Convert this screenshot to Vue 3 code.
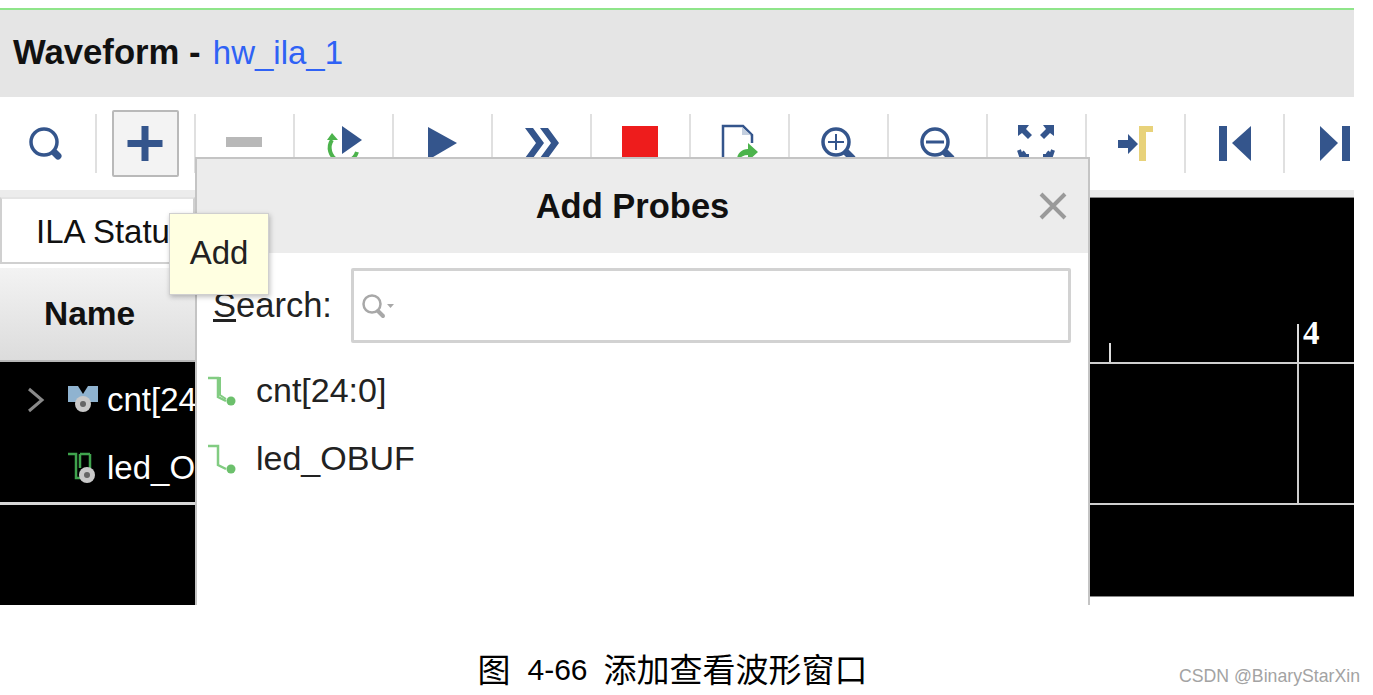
<script setup>
const blue = '#34558c'
const green = '#4cb34c'
const tools = [
  { name: 'search', parts: [
    { el: 'circle', cx: 28, cy: 28, r: 13, fill: 'none', stroke: blue, 'stroke-width': 3.500 },
    { el: 'path', d: 'M39 39l3 3', fill: 'none', stroke: blue, 'stroke-width': 7, 'stroke-linecap': 'round' } ] },
  { name: 'add', active: true, parts: [
    { el: 'path', d: 'M26.500 12h7v14h14v7h-14v14h-7v-14h-14v-7h14z', fill: blue } ] },
  { name: 'remove', parts: [
    { el: 'rect', x: 12, y: 23, width: 36, height: 10, fill: '#b8b8b8' } ] },
  { name: 'rerun', parts: [
    { el: 'path', d: 'M19 26a14 14 0 1 0 25 12', fill: 'none', stroke: green, 'stroke-width': 4 },
    { el: 'path', d: 'M14 26l5-7 6 7z', fill: green },
    { el: 'path', d: 'M29 12l20 14-20 14z', fill: blue } ] },
  { name: 'play', parts: [
    { el: 'path', d: 'M16 13l29 16-29 17z', fill: blue } ] },
  { name: 'forward', parts: [
    { el: 'path', d: 'M14 14h8l11 15-11 15h-8l11-15zM29 14h8l11 15-11 15h-8l11-15z', fill: blue } ] },
  { name: 'stop', parts: [
    { el: 'rect', x: 12, y: 12, width: 36, height: 36, fill: '#ee1c1c' } ] },
  { name: 'export', parts: [
    { el: 'path', d: 'M14 46V12h20l9 9v8', fill: 'none', stroke: blue, 'stroke-width': 2.500 },
    { el: 'path', d: 'M33 13v8h9z', fill: '#c4cfdf' },
    { el: 'path', d: 'M28 46c0-7 5-11 11-11v-6l10 9-10 9v-6c-4 0-8 2-11 5z', fill: green } ] },
  { name: 'zoom-in', parts: [
    { el: 'circle', cx: 28, cy: 28, r: 13, fill: 'none', stroke: blue, 'stroke-width': 3.500 },
    { el: 'path', d: 'M20 28h16M28 20v16', fill: 'none', stroke: blue, 'stroke-width': 2 },
    { el: 'path', d: 'M39 39l5 5', fill: 'none', stroke: blue, 'stroke-width': 7, 'stroke-linecap': 'round' } ] },
  { name: 'zoom-out', parts: [
    { el: 'circle', cx: 28, cy: 28, r: 13, fill: 'none', stroke: blue, 'stroke-width': 3.500 },
    { el: 'path', d: 'M19 28h18', fill: 'none', stroke: blue, 'stroke-width': 3 },
    { el: 'path', d: 'M39 39l5 5', fill: 'none', stroke: blue, 'stroke-width': 7, 'stroke-linecap': 'round' } ] },
  { name: 'fit', parts: [
    { el: 'path', d: 'M12 11h11l-3 4 6 6-4 4-6-6-4 3zM48 11H37l3 4-6 6 4 4 6-6 4 3z', fill: blue },
    { el: 'path', d: 'M13 36l2 6h8M47 36l-2 6h-8M14 42l5-4M46 42l-5-4', fill: 'none', stroke: blue, 'stroke-width': 4 } ] },
  { name: 'marker', parts: [
    { el: 'path', d: 'M13 26h10v-6l10 10-10 10v-6H13z', fill: blue },
    { el: 'path', d: 'M34 12h14v6h-7v29h-7z', fill: '#e8d27a' } ] },
  { name: 'prev', parts: [
    { el: 'rect', x: 15, y: 12, width: 8, height: 35, fill: blue },
    { el: 'path', d: 'M47 12v35L28 29z', fill: blue } ] },
  { name: 'next', parts: [
    { el: 'path', d: 'M16 12v35l18-18z', fill: blue },
    { el: 'rect', x: 38, y: 12, width: 8, height: 35, fill: blue } ] }
]
const attrs = ({ el, ...rest }) => rest
const probes = [
  { name: 'cnt[24:0]', double: true },
  { name: 'led_OBUF', double: false }
]
</script>

<template>
  <div class="page">
    <div class="shot">
      <header class="title">
        <b>Waveform -</b>&nbsp;<span class="link">hw_ila_1</span>
      </header>

      <div class="toolbar">
        <div v-for="t in tools" :key="t.name" class="tool" :class="{ active: t.active }">
          <svg class="tool-icon" width="60" height="59" viewBox="0 0 60 59">
            <component :is="p.el" v-for="(p, i) in t.parts" :key="i" v-bind="attrs(p)" />
          </svg>
        </div>
      </div>

      <div class="strip"></div>

      <div class="main">
        <section class="left">
          <div class="tab">ILA Status</div>
          <div class="colhead">Name</div>
          <div class="tree">
            <div class="row">
              <svg class="chev" width="20" height="30" viewBox="0 0 20 30">
                <path d="M3 4l13 11L3 26" fill="none" stroke="#8a8a8a" stroke-width="3" />
              </svg>
              <svg class="sig" width="32" height="30" viewBox="0 0 32 30">
                <path d="M1 1h10l5 8 5-8h10v16H21l-5 3-5-3H1z" fill="#8fb3d0" />
                <circle cx="16" cy="19" r="8" fill="#c9c9c9" />
                <circle cx="16" cy="19" r="3" fill="#666" />
              </svg>
              <span>cnt[24:0]</span>
            </div>
            <div class="row second">
              <svg class="sig" width="32" height="32" viewBox="0 0 32 32">
                <path d="M1 2h8v24h6M13 2v14M23 2v14M13 2h10" fill="none" stroke="#3fa34d" stroke-width="2.500" />
                <circle cx="20" cy="23" r="8" fill="#c9c9c9" />
                <circle cx="20" cy="23" r="3" fill="#666" />
              </svg>
              <span>led_OBUF</span>
            </div>
          </div>
        </section>

        <section class="wave">
          <div class="ruler">
            <i class="tick"></i>
            <i class="major"></i>
            <span class="digit">4</span>
          </div>
          <div class="lane"></div>
          <div class="rest"></div>
        </section>
      </div>

      <div class="dialog">
        <div class="dlg-head">
          <strong>Add Probes</strong>
          <svg class="close" width="30" height="30" viewBox="0 0 30 30">
            <path d="M3 3l24 24M27 3L3 27" fill="none" stroke="#9a9a9a" stroke-width="4" />
          </svg>
        </div>
        <div class="search">
          <label><u>S</u>earch:</label>
          <div class="input">
            <svg width="40" height="30" viewBox="0 0 40 30">
              <circle cx="13" cy="13" r="8.500" fill="none" stroke="#a8a8a8" stroke-width="2.500" />
              <path d="M19 20l5 5" stroke="#a8a8a8" stroke-width="4" stroke-linecap="round" />
              <path d="M28 13h7l-3.500 4z" fill="#a8a8a8" />
            </svg>
          </div>
        </div>
        <ul class="probes">
          <li v-for="p in probes" :key="p.name">
            <svg width="38" height="36" viewBox="0 0 38 36">
              <path d="M1 6h10v19l8 4" fill="none" stroke="#82cc82" stroke-width="2.500" />
              <path v-if="p.double" d="M5 6h8v17l6 4" fill="none" stroke="#82cc82" stroke-width="2" />
              <circle cx="24" cy="29" r="4.500" fill="#6cc06c" />
            </svg>
            <span>{{ p.name }}</span>
          </li>
        </ul>
      </div>

      <div class="tip">Add</div>
    </div>

    <footer class="caption">
      <span class="fig">图</span><span class="num">4-66</span><span>添加查看波形窗口</span>
    </footer>
    <div class="mark">CSDN @BinaryStarXin</div>
  </div>
</template>

<style>
html, body { margin: 0; background: #fff; }
</style>

<style scoped>
.page {
  position: relative;
  width: 1373px;
  height: 695px;
  overflow: hidden;
  background: #fff;
  color: #111;
  font-family: "Liberation Sans", Arial, sans-serif;
}
.shot {
  position: relative;
  width: 1354px;
  height: 597px;
  margin-top: 8px;
  overflow: hidden;
  background: #fff;
}
.title {
  height: 85px;
  border-top: 2px solid #8fe58a;
  background: #e5e5e5;
  display: flex;
  align-items: center;
  padding-left: 13px;
  padding-bottom: 2px;
  font-size: 33px;
  white-space: pre;
}
.title b { font-size: 34.700px; }
.link { color: #2f62f5; margin-left: 3px; }
.toolbar {
  display: flex;
  height: 59px;
  padding: 17px 0;
  margin-left: -2px;
  width: 1400px;
  background: #fff;
}
.tool {
  position: relative;
  flex: 0 0 99px;
  box-sizing: border-box;
  height: 59px;
  border-right: 2px solid #e0e0e0;
  display: flex;
  justify-content: center;
}
.tool:last-child { border-right: 0; }
.tool-icon { position: relative; flex: none; margin-left: -2px; }
.tool.active::before {
  content: "";
  position: absolute;
  left: 15px;
  right: 15px;
  top: -4px;
  bottom: -4px;
  border: 2px solid #b9b9b9;
  border-radius: 2px;
  background: #f3f3f3;
}
.strip { height: 7px; background: #ececec; }
.main { display: flex; height: 408px; }
.left { width: 195px; flex: none; display: flex; flex-direction: column; }
.tab {
  height: 67px;
  box-sizing: border-box;
  border: 2px solid #d0d0d0;
  border-top-color: #e4e4e4;
  background: #fff;
  padding-left: 34px;
  font-size: 33px;
  line-height: 66px;
  white-space: nowrap;
  overflow: hidden;
  flex: none;
}
.colhead {
  height: 94px;
  margin-top: 4px;
  flex: none;
  box-sizing: border-box;
  border-bottom: 2px solid #b8b8b8;
  background: linear-gradient(#f3f3f3, #dcdcdc);
  padding-left: 44px;
  font-size: 33.500px;
  font-weight: 700;
  line-height: 92px;
}
.tree { flex: 1; background: #000; color: #fff; overflow: hidden; }
.row {
  display: flex;
  align-items: center;
  height: 68px;
  font-size: 33px;
  white-space: nowrap;
  padding-left: 26px;
  margin-top: 4px;
}
.row.second {
  margin-top: 0;
  padding-left: 67px;
  height: 68px;
  border-bottom: 3px solid #d8d8d8;
}
.chev, .sig { flex: none; }
.chev { margin-right: 21px; }
.sig { margin-right: 8px; }
.wave {
  margin-left: 895px;
  width: 264px;
  height: 400px;
  flex: none;
  background: #000;
  border-top: 1px solid #888;
  border-bottom: 1px solid #888;
  box-sizing: border-box;
  display: flex;
  flex-direction: column;
}
.ruler {
  position: relative;
  height: 164px;
  border-bottom: 2px solid #cfcfcf;
  flex: none;
}
.tick { position: absolute; left: 19px; bottom: 0; width: 2px; height: 19px; background: #ddd; }
.major { position: absolute; left: 207px; bottom: 0; width: 2px; height: 38px; background: #ddd; }
.digit {
  position: absolute;
  left: 213px;
  top: 116px;
  color: #fff;
  font-family: "Liberation Serif", serif;
  font-weight: 700;
  font-size: 33px;
  line-height: 38px;
}
.lane {
  position: relative;
  height: 139px;
  border-bottom: 2px solid #cfcfcf;
  flex: none;
  background: linear-gradient(#ccc, #ccc) 207px 0 / 2px 100% no-repeat;
}
.rest { flex: 1; }
.dialog {
  position: absolute;
  left: 195px;
  top: 149px;
  width: 895px;
  height: 460px;
  box-sizing: border-box;
  border: 2px solid #c4c4c4;
  background: #fff;
}
.dlg-head {
  position: relative;
  height: 94px;
  background: #ececec;
  display: flex;
  align-items: center;
  justify-content: center;
}
.dlg-head strong { font-size: 34.500px; margin-right: 20px; }
.close { position: absolute; right: 20px; top: 32px; }
.search {
  display: flex;
  align-items: center;
  padding: 15px 17px 0 16px;
  font-size: 34.500px;
  color: #222;
}
.search label { width: 138px; flex: none; white-space: nowrap; }
.input {
  flex: 1;
  height: 75px;
  box-sizing: border-box;
  border: 3px solid #d2d2d2;
  border-radius: 2px;
  display: flex;
  align-items: center;
  padding-left: 5px;
}
.probes { list-style: none; margin: 13px 0 0; padding: 0 0 0 10px; }
.probes li {
  display: flex;
  align-items: center;
  height: 68px;
  gap: 11px;
  font-size: 34px;
  color: #222;
}
.tip {
  position: absolute;
  left: 169px;
  top: 205px;
  width: 100px;
  height: 82px;
  box-sizing: border-box;
  border: 1px solid #cfcfcf;
  background: #ffffe1;
  box-shadow: 1px 2px 5px rgba(0, 0, 0, 0.25);
  font-size: 33px;
  line-height: 78px;
  text-align: center;
  color: #222;
}
.caption {
  position: relative;
  display: flex;
  justify-content: center;
  align-items: center;
  height: 50px;
  margin-top: 8px;
  padding-top: 30px;
  padding-right: 28px;
  box-sizing: content-box;
  font-family: "Noto Sans CJK SC", "Liberation Sans", sans-serif;
  font-size: 33px;
  color: #000;
}
.fig { margin-right: 17px; }
.num { margin-right: 16px; font-family: "Liberation Sans", sans-serif; font-size: 30px; padding-top: 3px; }
.mark {
  position: absolute;
  right: 13px;
  top: 665px;
  font-size: 17.700px;
  line-height: 22px;
  color: #a3a3a3;
}
</style>
